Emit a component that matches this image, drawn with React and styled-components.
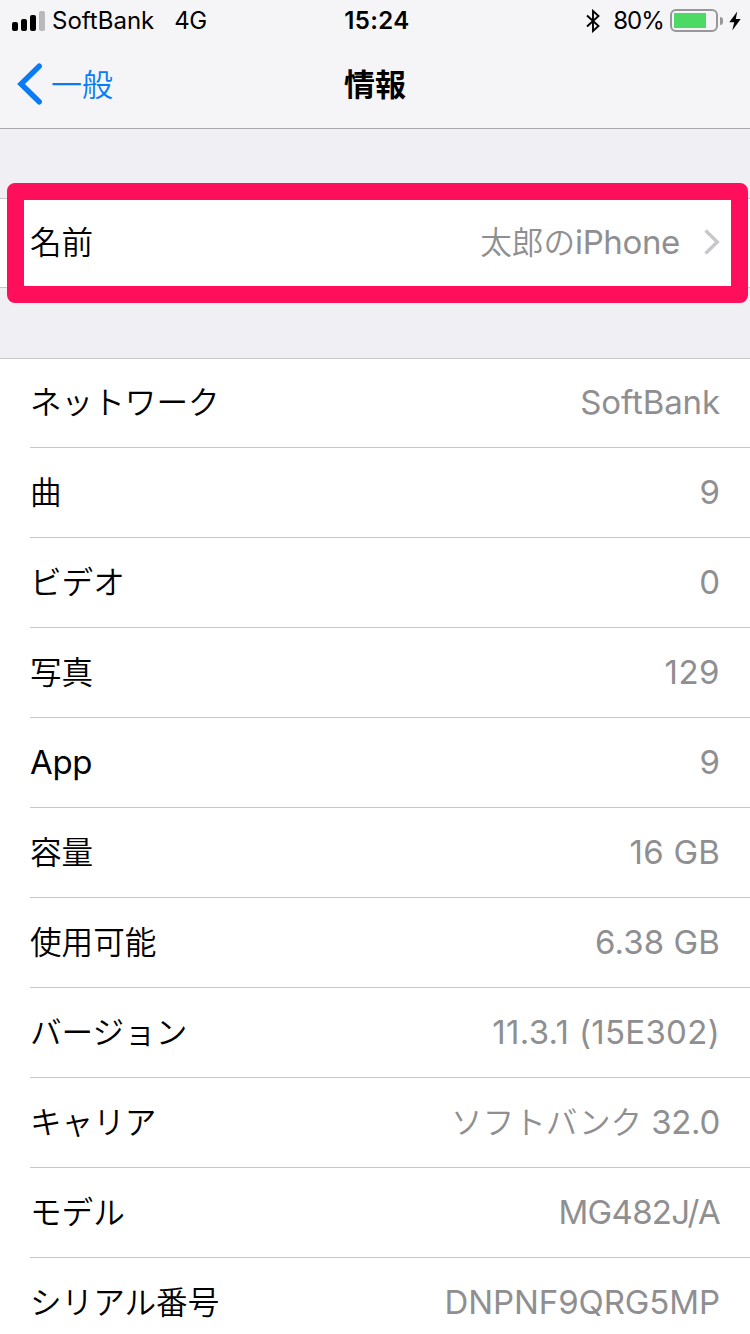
import React from 'react';
import styled, { createGlobalStyle } from 'styled-components';

const details = [
  { label: 'ネットワーク', value: 'SoftBank', spacing: -0.1 },
  { label: '曲', value: '9' },
  { label: 'ビデオ', value: '0' },
  { label: '写真', value: '129', spacing: 0.5 },
  { label: 'App', value: '9', latin: true },
  { label: '容量', value: '16 GB', spacing: 0.2 },
  { label: '使用可能', value: '6.38 GB', spacing: 0.1 },
  { label: 'バージョン', value: '11.3.1 (15E302)', spacing: 0.3 },
  { label: 'キャリア', kana: 'ソフトバンク', value: ' 32.0', spacing: -0.3 },
  { label: 'モデル', value: 'MG482J/A', spacing: -0.7 },
  { label: 'シリアル番号', value: 'DNPNF9QRG5MP', spacing: -0.1 },
];

const StatusBar = () => (
  <StatusContainer>
    <StatusSide>
      <svg width="34" height="20" viewBox="0 0 34 20">
        <rect x="0" y="11" width="6" height="9" rx="2" />
        <rect x="9" y="8" width="6" height="12" rx="2" />
        <rect x="18" y="4" width="6" height="16" rx="2" />
        <rect x="27" y="0" width="6" height="20" rx="2" fill="#b9b9bb" />
      </svg>
      <Carrier>SoftBank</Carrier>
      <Signal>4G</Signal>
    </StatusSide>
    <Clock>15:24</Clock>
    <StatusSide $end>
      <svg width="14" height="24" viewBox="0 0 14 24" fill="none" stroke="#000" strokeWidth="1.9">
        <path d="M1 6.5L12.5 17L7 22V2L12.5 7L1 17.5" />
      </svg>
      <Percent>80%</Percent>
      <Battery>
        <BatteryLevel style={{ width: '80%' }} />
      </Battery>
      <BatteryCap />
      <svg width="12" height="20" viewBox="0 0 12 20">
        <path d="M8.2 0.5L0.3 11.2H5.2L3.3 19.5L11.7 8H6.8L8.2 0.5Z" />
      </svg>
    </StatusSide>
  </StatusContainer>
);

const App = () => {
  return (
    <Screen>
      <GlobalStyle />
      <Header>
        <StatusBar />
        <NavBar>
          <BackButton>
            <svg width="26" height="42" viewBox="0 0 26 42" fill="none" stroke="#0a7bf5" strokeWidth="5.4" strokeLinecap="round" strokeLinejoin="miter">
              <path d="M22.2 3.2L4 21L22.2 38.8" />
            </svg>
            <BackText>一般</BackText>
          </BackButton>
          <Title>情報</Title>
          <span />
        </NavBar>
      </Header>
      <NameGroup>
        <Row>
          <Label>名前</Label>
          <Value $spacing={-0.35}>
            <Kana>太郎の</Kana>
            <span>iPhone</span>
            <Chevron width="16" height="26" viewBox="0 0 16 26" fill="none" stroke="#c7c7cc" strokeWidth="3.4">
              <path d="M1.5 1.5L13.3 13L1.5 24.5" />
            </Chevron>
          </Value>
        </Row>
        <Highlight />
      </NameGroup>
      <DetailGroup>
        {details.map((item) => (
          <Row key={item.label}>
            <Label $latin={item.latin}>{item.label}</Label>
            <Value $spacing={item.spacing}>
              {item.kana && <Kana>{item.kana}</Kana>}
              <span>{item.value}</span>
            </Value>
          </Row>
        ))}
      </DetailGroup>
    </Screen>
  );
};

export default App;

const GlobalStyle = createGlobalStyle`
  body {
    margin: 0;
    overflow: hidden;
  }
  * {
    box-sizing: border-box;
  }
`;

const Screen = styled.div`
  width: 750px;
  height: 1334px;
  overflow: hidden;
  background-color: #efeff4;
  color: #000;
  font-family: Inter, 'Noto Sans CJK JP', sans-serif;
`;

const Header = styled.div`
  height: 129px;
  background-color: #f5f5f7;
  border-bottom: 1px solid #a8a8ad;
`;

const StatusContainer = styled.div`
  display: grid;
  grid-template-columns: 1fr auto 1fr;
  align-items: center;
  height: 41px;
  padding: 0 9px 0 12px;
  font-size: 24px;
`;

const StatusSide = styled.div`
  display: flex;
  align-items: center;
  justify-content: ${({ $end }) => ($end ? 'flex-end' : 'flex-start')};
`;

const Carrier = styled.span`
  margin-left: 6px;
`;

const Signal = styled.span`
  margin-left: 20px;
  letter-spacing: -0.6px;
`;

const Clock = styled.span`
  margin-left: 1px;
  font-weight: 600;
  letter-spacing: 0.4px;
`;

const Percent = styled.span`
  margin: 0 6px 0 13px;
  letter-spacing: -0.9px;
`;

const Battery = styled.div`
  width: 48px;
  height: 23px;
  padding: 2px;
  border: 2px solid #98989b;
  border-radius: 6px;
`;

const BatteryLevel = styled.div`
  height: 100%;
  background-color: #4cd964;
`;

const BatteryCap = styled.div`
  width: 3px;
  height: 8px;
  margin: 0 6px 0 2px;
  background-color: #98989b;
  border-radius: 0 3px 3px 0;
`;

const NavBar = styled.div`
  display: grid;
  grid-template-columns: 1fr auto 1fr;
  align-items: center;
  height: 86px;
  padding: 0 17px;
`;

const BackButton = styled.div`
  display: flex;
  align-items: center;
  color: #0a7bf5;
`;

const BackText = styled.span`
  margin: -4px 0 0 8px;
  font-family: 'Noto Sans CJK JP DemiLight', 'Noto Sans CJK JP', sans-serif;
  font-size: 31px;
  font-weight: 350;
`;

const Title = styled.span`
  margin-top: -4px;
  font-family: 'Noto Sans CJK JP', sans-serif;
  font-size: 31px;
  font-weight: 700;
`;

const NameGroup = styled.div`
  position: relative;
  height: 90px;
  margin-top: 69px;
  background-color: #fff;
  border-top: 1px solid #c8c7cc;
  border-bottom: 1px solid #c8c7cc;
`;

const Highlight = styled.div`
  position: absolute;
  top: -16px;
  left: 7px;
  width: 741px;
  height: 120px;
  border: 17px solid #ff0f5b;
  border-radius: 8px;
`;

const DetailGroup = styled.div`
  margin-top: 70px;
  background-color: #fff;
  border-top: 1px solid #c8c7cc;
`;

const Row = styled.div`
  display: flex;
  align-items: center;
  justify-content: space-between;
  height: 88px;
  margin-left: 30px;
  padding: 0 30px 2px 0;

  & + & {
    height: 90px;
    padding-bottom: 1px;
    border-top: 1px solid #c8c7cc;
  }
`;

const Label = styled.span`
  margin-top: ${({ $latin }) => ($latin ? '0' : '-4px')};
  font-family: ${({ $latin }) =>
    $latin ? 'Inter' : "'Noto Sans CJK JP DemiLight', 'Noto Sans CJK JP'"}, sans-serif;
  font-size: ${({ $latin }) => ($latin ? '33px' : '31.6px')};
  font-weight: ${({ $latin }) => ($latin ? 400 : 350)};
  letter-spacing: ${({ $latin }) => ($latin ? '-0.3px' : '0')};
`;

const Value = styled.span`
  display: flex;
  align-items: center;
  color: #8f8f91;
  font-size: 33px;
  letter-spacing: ${({ $spacing }) => $spacing || 0}px;
  white-space: pre;
`;

const Kana = styled.span`
  margin-top: -4px;
  font-family: 'Noto Sans CJK JP DemiLight', 'Noto Sans CJK JP', sans-serif;
  font-size: 31.6px;
  font-weight: 350;
  letter-spacing: 0;
`;

const Chevron = styled.svg`
  margin-left: 24px;
`;
